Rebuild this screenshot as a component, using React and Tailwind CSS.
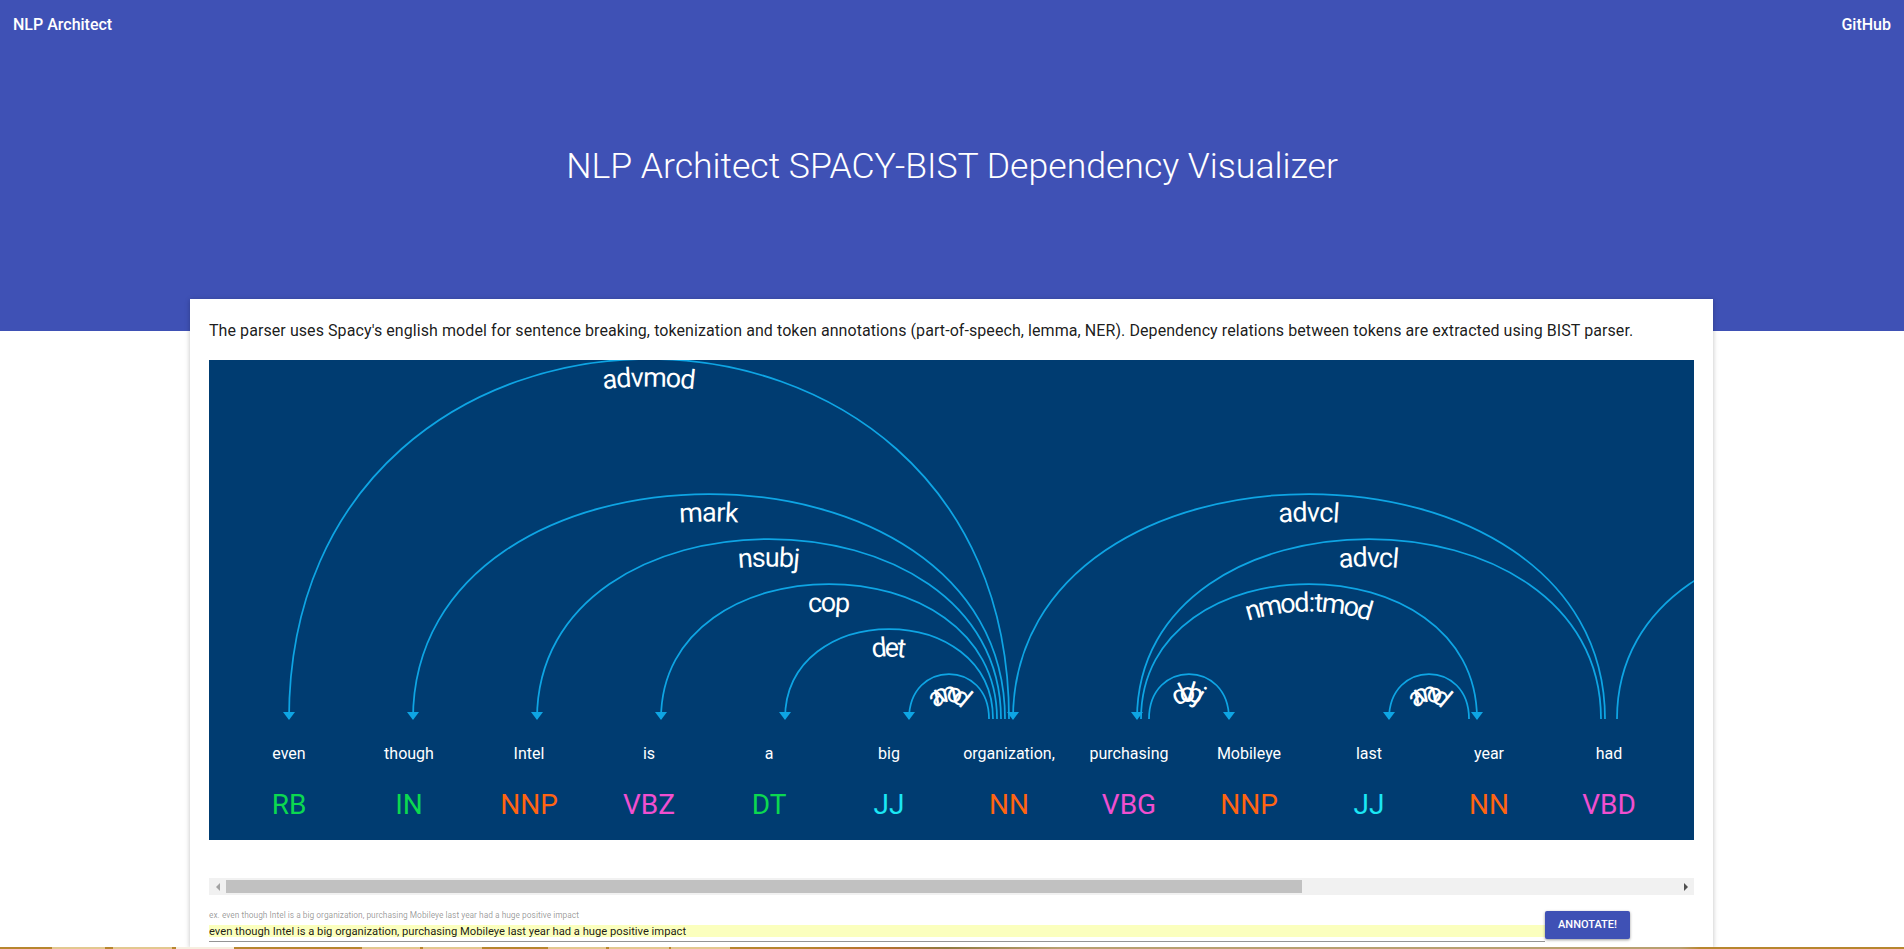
const FONT = "font-['Roboto',sans-serif]";

// diagram coords are page coords, shifted by the svg's top-left
const BASE_Y = 360;
const BASE_X = 209;

const tokens = [
  { word: "even", tag: "RB", color: "#0cd850" },
  { word: "though", tag: "IN", color: "#0cd850" },
  { word: "Intel", tag: "NNP", color: "#ff6412" },
  { word: "is", tag: "VBZ", color: "#f04fd0" },
  { word: "a", tag: "DT", color: "#0cd850" },
  { word: "big", tag: "JJ", color: "#1be7f5" },
  { word: "organization,", tag: "NN", color: "#ff6412" },
  { word: "purchasing", tag: "VBG", color: "#f04fd0" },
  { word: "Mobileye", tag: "NNP", color: "#ff6412" },
  { word: "last", tag: "JJ", color: "#1be7f5" },
  { word: "year", tag: "NN", color: "#ff6412" },
  { word: "had", tag: "VBD", color: "#f04fd0" },
];

const arcs = [
  { label: "advmod", x1: 289, x2: 1009, curve: 480, arrow: 289 },
  { label: "mark", x1: 413, x2: 1005, curve: 300, arrow: 413 },
  { label: "nsubj", x1: 537, x2: 1001, curve: 240, arrow: 537 },
  { label: "cop", x1: 661, x2: 997, curve: 180, arrow: 661 },
  { label: "det", x1: 785, x2: 993, curve: 120, arrow: 785 },
  { label: "amod", x1: 909, x2: 989, curve: 60, arrow: 909 },
  { label: "advcl", x1: 1013, x2: 1605, curve: 300, arrow: 1013 },
  { label: "advcl", x1: 1137, x2: 1601, curve: 240, arrow: 1137 },
  { label: "nmod:tmod", x1: 1141, x2: 1477, curve: 180, arrow: 1477 },
  { label: "dobj", x1: 1149, x2: 1229, curve: 60, arrow: 1229 },
  { label: "amod", x1: 1389, x2: 1469, curve: 60, arrow: 1389 },
  { label: "", x1: 1617, x2: 2081, curve: 240, arrow: 2081 },
];

function Diagram() {
  const y = 719 - BASE_Y;
  return (
    <svg width="1485" height="480" className="block">
      {arcs.map((arc, i) => {
        const x1 = arc.x1 - BASE_X;
        const x2 = arc.x2 - BASE_X;
        const ax = arc.arrow - BASE_X;
        const c = y - arc.curve;
        return (
          <g key={i}>
            <path
              id={`arc-${i}`}
              d={`M${x1},${y} C${x1},${c} ${x2},${c} ${x2},${y}`}
              fill="none"
              stroke="#0ea5e4"
              strokeWidth="1.75"
            />
            <text dy="1.02em" fill="#fff" fontSize="27" fontFamily="Roboto, sans-serif">
              <textPath href={`#arc-${i}`} startOffset="50%" textAnchor="middle">
                {arc.label}
              </textPath>
            </text>
            <path d={`M${ax},${y + 1} L${ax - 6},${y - 7} ${ax + 6},${y - 7}`} fill="#0ea5e4" />
          </g>
        );
      })}
      {tokens.map((t, i) => (
        <text key={i} textAnchor="middle" fontFamily="Roboto, sans-serif" x={80 + i * 120}>
          <tspan x={80 + i * 120} y="399" fill="#fff" fontSize="16">
            {t.word}
          </tspan>
          <tspan x={80 + i * 120} y="454" fill={t.color} fontSize="28">
            {t.tag}
          </tspan>
        </text>
      ))}
    </svg>
  );
}

function ScrollBar() {
  return (
    <div className="flex items-center h-[17px] bg-[#f1f1f1]">
      <div className="w-[17px] flex justify-center">
        <div className="w-0 h-0 border-y-[4px] border-y-transparent border-r-[4px] border-r-[#a3a3a3]" />
      </div>
      <div className="w-[1076px] h-[13px] bg-[#c1c1c1]" />
      <div className="flex-1" />
      <div className="w-[17px] flex justify-center">
        <div className="w-0 h-0 border-y-[4px] border-y-transparent border-l-[4px] border-l-[#505050]" />
      </div>
    </div>
  );
}

// thin slice of a photo showing at the very bottom of the window
function BottomStrip() {
  return (
    <div className="relative z-10 flex h-[2px] shrink-0 bg-[linear-gradient(90deg,#b8862e_0,#b8862e_800px,#b8702e_880px,#8f7a40_946px,#b8a070_1058px,#b8a070_1680px,#b8862e_1700px)]">
      <div className="ml-[52px] w-[53px] bg-[#e3c88f]" />
      <div className="ml-[8px] w-[59px] bg-[#e3c88f]" />
      <div className="ml-[4px] w-[58px] bg-[#f6efe0]" />
      <div className="ml-[128px] w-[58px] bg-[#e3c88f]" />
      <div className="ml-[3px] w-[59px] bg-[#e3c88f]" />
      <div className="ml-[66px] w-[58px] bg-[#e3c88f]" />
      <div className="ml-[3px] w-[60px] bg-[#e3c88f]" />
      <div className="ml-[2px] w-[59px] bg-[#e3c88f]" />
    </div>
  );
}

export default function App() {
  return (
    <div className={`${FONT} flex flex-col h-[949px] overflow-hidden bg-white`}>
      <div className="h-[331px] shrink-0 bg-[#3f51b5] text-white">
        <div className="flex justify-between px-[13px] pt-[15px] text-[16px] font-medium leading-[20px]">
          <span>NLP Architect</span>
          <span>GitHub</span>
        </div>
        <h1 className="pt-[111px] text-center text-[35.6px] font-light leading-[40px]">
          NLP Architect SPACY-BIST Dependency Visualizer
        </h1>
      </div>

      <div className="flex-1 min-h-0 -mt-[32px] ml-[190px] w-[1523px] bg-white shadow-[0_1px_5px_rgba(0,0,0,0.25)] px-[19px]">
        <p className="pt-[22px] h-[61px] text-[16px] leading-[20px] tracking-[0.075px] text-black/90 whitespace-nowrap">
          The parser uses Spacy's english model for sentence breaking, tokenization and token annotations (part-of-speech, lemma, NER). Dependency relations between tokens are extracted using BIST parser.
        </p>
        <div className="w-[1485px] h-[480px] bg-[#003c71] overflow-hidden">
          <Diagram />
        </div>
        <div className="w-[1485px] mt-[38px]">
          <ScrollBar />
        </div>
        <div className="flex w-[1421px] mt-[15px]">
          <div className="flex-1">
            <div className="text-[8.4px] leading-[10px] text-black/40 whitespace-nowrap">
              ex. even though Intel is a big organization, purchasing Mobileye last year had a huge positive impact
            </div>
            <div className="mt-[5px] h-[12px] bg-[#fbffbe] text-[11.2px] leading-[13px] text-black/90 whitespace-nowrap">
              even though Intel is a big organization, purchasing Mobileye last year had a huge positive impact
            </div>
            <div className="mt-[4px] h-[1px] bg-[#949494]" />
          </div>
          <button className="mt-[1px] w-[85px] h-[28px] bg-[#3f51b5] text-white text-[11px] font-medium rounded-[2px] shadow-[0_1px_3px_rgba(0,0,0,0.4)]">
            ANNOTATE!
          </button>
        </div>
      </div>

      <BottomStrip />
    </div>
  );
}
